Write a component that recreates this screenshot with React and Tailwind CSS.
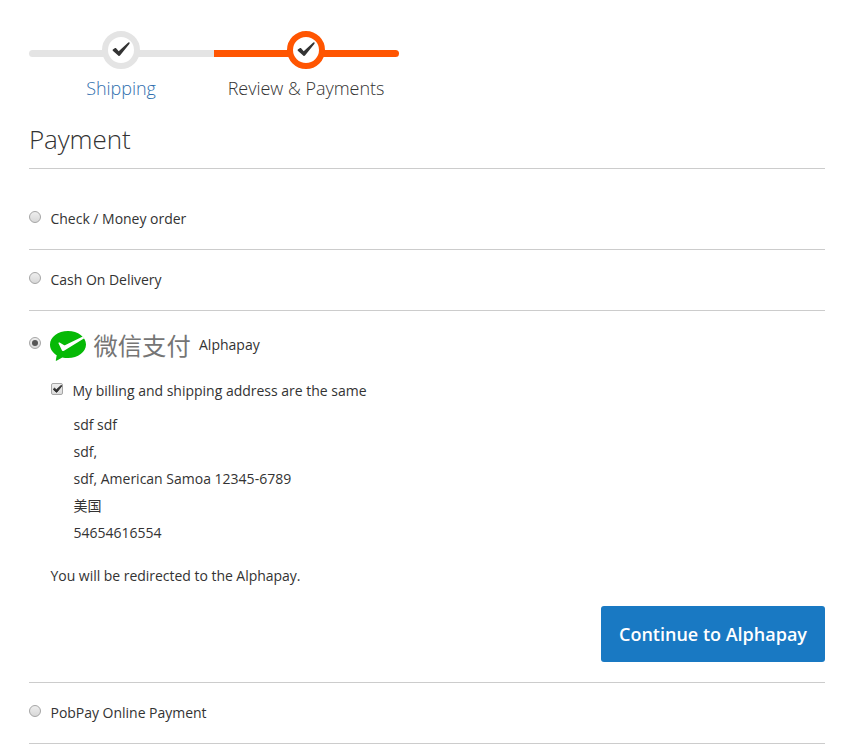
import { useState } from "react";
import clsx from "clsx";

const steps = [
  { label: "Shipping", active: false },
  { label: "Review & Payments", active: true },
];

const address = [
  "sdf sdf",
  "sdf,",
  "sdf, American Samoa 12345-6789",
  "美国",
  "54654616554",
];

function CheckMark({ className }) {
  return (
    <svg viewBox="0 0 18 15" className={className} fill="currentColor">
      <path d="M.9 7.600 2.700 6.200c.5-.4 1-.3 1.400.1l2.600 2.900L15.700.9c.7-.6 1.300-.7 1.700-.4.4.3.3.9-.1 1.400L8.200 13.300c-.7.9-1.400.9-2 .1L.8 8.700c-.3-.4-.3-.8.1-1.100Z" />
    </svg>
  );
}

function WeChatPayLogo() {
  return (
    <span className="flex h-[30px] w-[141px] items-center">
      <svg viewBox="0 0 36 30" className="h-[30px] w-9 shrink-0">
        <path
          d="M18 0C8 0 0 6 0 13.500c0 4.500 2.500 8 6.700 10.700L5.800 29.300c-.1.500.2.7.7.4l5.800-3.300c1.800.5 3.700.7 5.700.7 10 0 18-6.100 18-13.600S28 0 18 0Z"
          fill="#06b906"
        />
        <path
          d="M8.600 12.600c-.4-.9.3-1.400 1-1l4.200 2.400c.5.3 1 .3 1.600 0L32.800 5.600l1.500 1.600L14 19.800c-.8.500-1.600.4-2-.4Z"
          fill="#fff"
        />
      </svg>
      <span className="mb-[3px] ml-[7.500px] font-['Noto_Sans_CJK_SC',sans-serif] text-[24.300px] leading-[30px] font-normal whitespace-nowrap text-[#757575]">
        微信支付
      </span>
    </span>
  );
}

function Radio({ checked, onChange, className }) {
  return (
    <button
      type="button"
      role="radio"
      aria-checked={checked}
      onClick={onChange}
      className={clsx(
        "flex size-3 shrink-0 items-center justify-center rounded-full border border-[#a5a5a5] bg-linear-to-b from-[#eeeeee] to-[#d8d8d8]",
        className
      )}
    >
      {checked && <span className="size-1.5 rounded-full bg-[#555555]" />}
    </button>
  );
}

function PlainMethod({ title, checked, onChange }) {
  return (
    <div className="flex h-[61px] items-start border-b border-[#cccccc] pt-5">
      <Radio checked={checked} onChange={onChange} className="mt-0.5" />
      <span className="ml-[9.500px] leading-5 tracking-[-0.02px]">{title}</span>
    </div>
  );
}

export default function App() {
  const [method, setMethod] = useState("alphapay");
  const [sameAddress, setSameAddress] = useState(true);

  return (
    <main className="h-[752px] w-[847px] overflow-hidden bg-white pt-[31px] pr-[22px] pl-[29px] font-['Open_Sans','Noto_Sans_CJK_SC',sans-serif] text-[14px] text-[#333333]">
      <ul className="flex h-[71px]">
        {steps.map((step) => (
          <li key={step.label} className="w-[185px]">
            <div className="relative h-[38px] pt-[19px]">
              <div
                className={clsx(
                  "h-[7px]",
                  step.active ? "rounded-r-full bg-[#ff5501]" : "rounded-l-full bg-[#e4e4e4]"
                )}
              />
              <div
                className={clsx(
                  "absolute top-0 left-[73px] flex size-[38px] items-center justify-center rounded-full border-6 bg-white",
                  step.active ? "border-[#ff5501]" : "border-[#e4e4e4]"
                )}
              >
                <CheckMark className="mb-0.5 h-[15px] w-[18px]" />
              </div>
            </div>
            <div
              className={clsx(
                "mt-[7px] pr-px text-center text-[18px] leading-[25px] font-light tracking-[-0.03px]",
                !step.active && "text-[#2f6fae]"
              )}
            >
              {step.label}
            </div>
          </li>
        ))}
      </ul>

      <h1 className="mt-[19px] h-12 border-b border-[#cccccc] text-[26px] leading-9 font-light tracking-[-0.1px]">
        Payment
      </h1>

      <div className="mt-5">
        <PlainMethod
          title="Check / Money order"
          checked={method === "check"}
          onChange={() => setMethod("check")}
        />
        <PlainMethod
          title="Cash On Delivery"
          checked={method === "cash"}
          onChange={() => setMethod("cash")}
        />

        <section className="h-[372px] border-b border-[#cccccc] pt-5">
          <div className="flex items-start">
            <Radio
              checked={method === "alphapay"}
              onChange={() => setMethod("alphapay")}
              className="mt-1.5"
            />
            <div className="ml-[9px] flex items-start">
              <WeChatPayLogo />
              <span className="mt-1 ml-2 leading-5">Alphapay</span>
            </div>
          </div>

          <div className="mt-5 ml-[22px]">
            <div className="flex items-start">
              <button
                type="button"
                role="checkbox"
                aria-checked={sameAddress}
                onClick={() => setSameAddress(!sameAddress)}
                className="mt-0.5 flex size-3 shrink-0 items-center justify-center rounded-[2px] border border-[#a5a5a5] bg-linear-to-b from-[#eeeeee] to-[#dcdcdc]"
              >
                {sameAddress && (
                  <CheckMark className="h-2 w-[9px] stroke-current stroke-2" />
                )}
              </button>
              <span className="ml-[9.500px] leading-5 tracking-[-0.01px]">
                My billing and shipping address are the same
              </span>
            </div>

            <address className="mt-[10px] ml-[22.500px] leading-[27px] not-italic">
              {address.map((line) => (
                <div key={line} className="h-[27px]">
                  {line}
                </div>
              ))}
            </address>

            <p className="mt-5 -ml-[0.5px] leading-5 tracking-[-0.03px]">
              You will be redirected to the Alphapay.
            </p>
          </div>

          <div className="mt-5 flex justify-end">
            <button
              type="button"
              className="h-14 w-[224px] rounded-[3px] bg-[#1979c3] text-[18px] font-semibold text-white"
            >
              Continue to Alphapay
            </button>
          </div>
        </section>

        <PlainMethod
          title="PobPay Online Payment"
          checked={method === "pobpay"}
          onChange={() => setMethod("pobpay")}
        />
      </div>
    </main>
  );
}
